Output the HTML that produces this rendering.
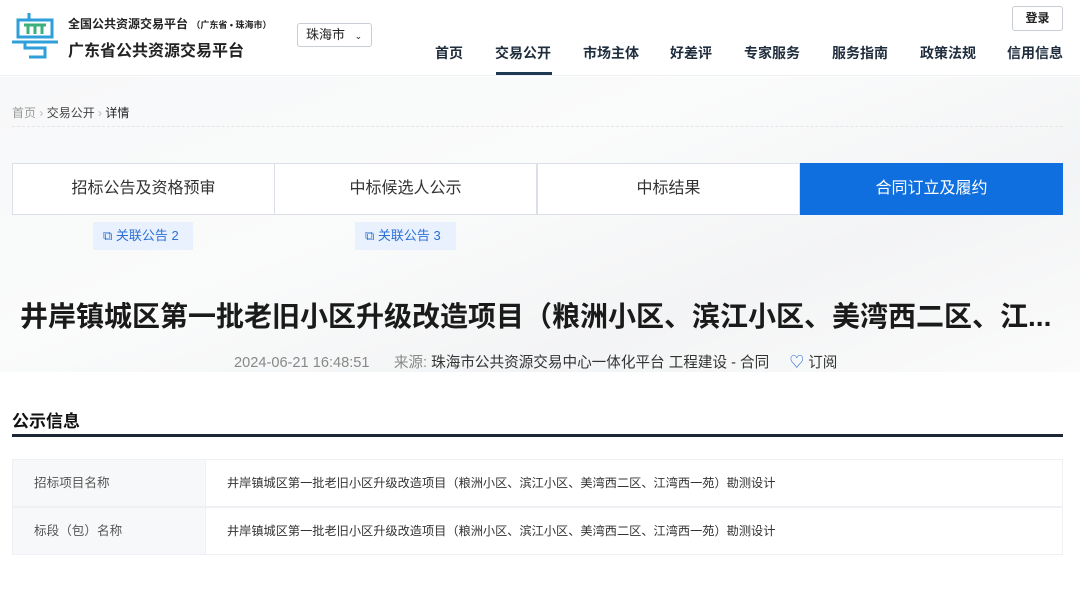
<!DOCTYPE html>
<html><head><meta charset="utf-8"><style>
*{margin:0;padding:0;box-sizing:border-box}
body{width:1080px;height:589px;overflow:hidden;background:#fff;font-family:"Liberation Sans","Noto Sans CJK SC",sans-serif;color:#333;position:relative}
.a{position:absolute}
.hdr{left:0;top:0;width:1080px;height:76px;background:#fff;border-bottom:1px solid #eef0f3}
.bg{left:0;top:77px;width:1080px;height:295px;background:linear-gradient(160deg,#f7f8f9 0%,#fafbfb 40%,#f3f4f5 70%,#fbfbfb 100%)}
.nav{top:43px;font-size:14px;font-weight:bold;color:#1f2d3d}
.tab{top:163px;height:52px;width:263px;border:1px solid #dcdfe6;background:#fff;font-size:16px;color:#333;text-align:center;line-height:50px}
.rel{top:222px;height:28px;background:#e8f1fd;color:#2c6fd6;font-size:13px;line-height:28px;padding-left:10px}
.row{left:12px;width:1051px;height:48px;border:1px solid #eef0f3;font-size:12.2px;color:#333}
.row .l{position:absolute;left:0;top:0;width:193px;height:100%;background:#f7f8f9;border-right:1px solid #eef0f3;padding-left:21px;line-height:46px;color:#555;font-size:12.6px}
.row .r{position:absolute;left:214px;top:0;line-height:46px}
</style></head><body>
<div class="a hdr"></div>
<svg class="a" style="left:10px;top:12px" width="50" height="48" viewBox="0 0 50 48">
<path d="M19 1v7M8 8h34v17H8z" stroke="#2e9fd8" stroke-width="3" fill="none"/>
<path d="M14 13h22M18 13v9M25 13v9M32 13v9" stroke="#3cb07a" stroke-width="3" fill="none"/>
<path d="M2 30h46M15 30v6h20v9H19" stroke="#2e9fd8" stroke-width="3" fill="none"/>
</svg>
<div class="a" style="left:68px;top:15px;font-size:12px;font-weight:bold;color:#222">全国公共资源交易平台 <span style="font-size:9px">（广东省 • 珠海市）</span></div>
<div class="a" style="left:68px;top:37px;font-size:16px;font-weight:bold;color:#222">广东省公共资源交易平台</div>
<div class="a" style="left:297px;top:23px;width:75px;height:24px;border:1px solid #c9cdd4;border-radius:3px;font-size:13px;line-height:22px;padding-left:8px;color:#222">珠海市 <span style="font-size:9px;margin-left:6px">⌄</span></div>
<div class="a" style="left:1012px;top:6px;width:51px;height:25px;border:1px solid #c9cdd4;border-radius:3px;font-size:12px;line-height:23px;text-align:center;font-weight:bold;color:#222">登录</div>
<div class="a nav" style="left:435px">首页</div>
<div class="a nav" style="left:495px">交易公开</div>
<div class="a" style="left:496px;top:72px;width:56px;height:3px;background:#1f3a52"></div>
<div class="a nav" style="left:583px">市场主体</div>
<div class="a nav" style="left:670px">好差评</div>
<div class="a nav" style="left:744px">专家服务</div>
<div class="a nav" style="left:832px">服务指南</div>
<div class="a nav" style="left:920px">政策法规</div>
<div class="a nav" style="left:1007px">信用信息</div>
<div class="a bg"></div>
<div class="a" style="left:12px;top:104px;font-size:12px;color:#999">首页 <span style="color:#bbb">›</span> <span style="color:#444">交易公开</span> <span style="color:#bbb">›</span> <span style="color:#222">详情</span></div>
<div class="a" style="left:12px;top:126px;width:1051px;border-top:1px dashed #e3e5e8"></div>
<div class="a tab" style="left:12px">招标公告及资格预审</div>
<div class="a tab" style="left:274px">中标候选人公示</div>
<div class="a tab" style="left:537px">中标结果</div>
<div class="a tab" style="left:800px;background:#0f6fde;border-color:#0f6fde;color:#fff;width:263px">合同订立及履约</div>
<div class="a rel" style="left:93px;width:100px">⧉ 关联公告 2</div>
<div class="a rel" style="left:355px;width:101px">⧉ 关联公告 3</div>
<div class="a" style="left:20px;top:295px;font-size:28px;font-weight:bold;color:#1a1a1a;white-space:nowrap">井岸镇城区第一批老旧小区升级改造项目（粮洲小区、滨江小区、美湾西二区、江...</div>
<div class="a" style="left:234px;top:351px;font-size:14.6px;color:#888;white-space:nowrap">2024-06-21 16:48:51 &nbsp;&nbsp;&nbsp;&nbsp; 来源: <span style="color:#333">珠海市公共资源交易中心一体化平台 工程建设 - 合同</span> &nbsp;&nbsp;&nbsp;&nbsp;<span style="color:#2c6fd6">♡</span> <span style="color:#333">订阅</span></div>
<div class="a" style="left:12px;top:407px;font-size:17px;font-weight:bold;color:#111">公示信息</div>
<div class="a" style="left:12px;top:434px;width:1051px;height:3px;background:#1c2733"></div>
<div class="a row" style="top:459px"><div class="l">招标项目名称</div><div class="r">井岸镇城区第一批老旧小区升级改造项目（粮洲小区、滨江小区、美湾西二区、江湾西一苑）勘测设计</div></div>
<div class="a row" style="top:507px"><div class="l">标段（包）名称</div><div class="r">井岸镇城区第一批老旧小区升级改造项目（粮洲小区、滨江小区、美湾西二区、江湾西一苑）勘测设计</div></div>
</body></html>
